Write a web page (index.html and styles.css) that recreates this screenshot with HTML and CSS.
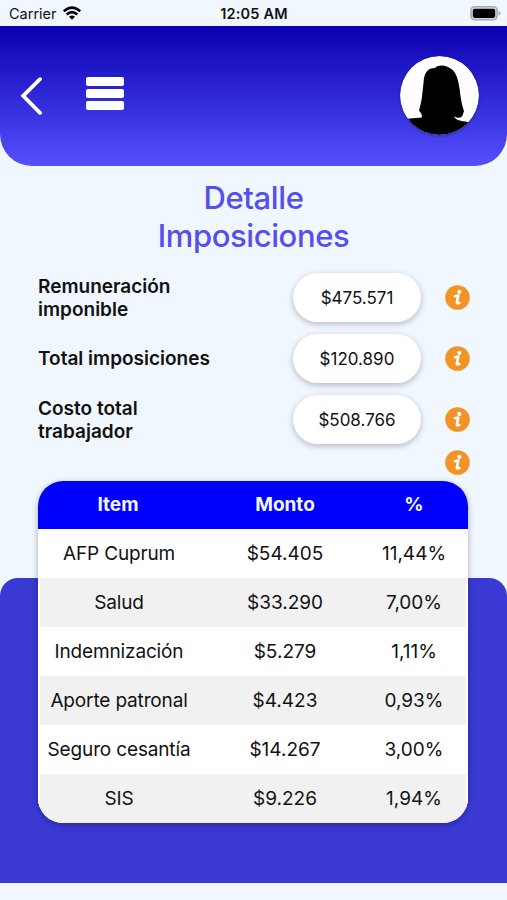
FILE: index.html
```html
<!DOCTYPE html>
<html lang="es">
<head>
    <meta charset="UTF-8">
    <meta name="viewport" content="width=device-width, initial-scale=1.0">
    <title>Detalle Imposiciones</title>
    <link rel="stylesheet" href="styles.css">
</head>
<body>
    <!-- Shared info icon -->
    <svg class="sprite" width="0" height="0">
        <symbol id="info" viewBox="0 0 25 25">
            <circle cx="12.5" cy="12.5" r="12.3" fill="#f39325"/>
            <circle cx="14.3" cy="6.900" r="2.100" fill="#fff"/>
            <path d="M10 11.300 L13.300 10.600 L11.900 17.400 Q11.600 19 14.300 18" fill="none" stroke="#fff" stroke-width="2.6" stroke-linecap="round" stroke-linejoin="round"/>
        </symbol>
    </svg>

    <div class="status-bar">
        <div class="carrier">
            <span>Carrier</span>
            <svg width="18" height="14" viewBox="0 0 18 14">
                <path d="M.8 5.300 Q9 -2 17.200 5.300" fill="none" stroke="#000" stroke-width="2.7"/>
                <path d="M3.700 8.500 Q9 3.700 14.300 8.500" fill="none" stroke="#000" stroke-width="2.5"/>
                <path d="M6 10.800 Q9 8.300 12 10.800 L9 13.800 Z" fill="#000"/>
            </svg>
        </div>
        <span class="time">12:05 AM</span>
        <svg class="battery" width="31" height="15" viewBox="0 0 31 15">
            <rect x="1" y=".8" width="26" height="13" rx="3.6" fill="#d9dde2" stroke="#a7abb0" stroke-width="1.6"/>
            <rect x="2.8" y="2.7" width="22.4" height="9.2" rx="1.8" fill="#000"/>
            <path d="M28.5 5 Q30.5 5.6 30.5 7.3 Q30.5 9 28.5 9.6 Z" fill="#a7abb0"/>
        </svg>
    </div>

    <header class="top">
        <svg class="back" width="22" height="38" viewBox="0 0 22 38">
            <path d="M20 2.200 L3.200 18.800 L20 35.800" fill="none" stroke="#fff" stroke-width="3.8" stroke-linecap="round"/>
        </svg>
        <div class="menu">
            <span></span>
            <span></span>
            <span></span>
        </div>
        <svg class="avatar" width="79" height="79" viewBox="0 0 79 79">
            <clipPath id="round"><circle cx="39.5" cy="39.5" r="39.5"/></clipPath>
            <circle cx="39.5" cy="39.5" r="39.5" fill="#fff"/>
            <path clip-path="url(#round)" d="M0 65 C5 62 14 62.500 22 61.500 L21.500 58 L19 54.500 C21.500 47 22.500 37 23.500 27 C24 16 28 12 35 12 C38 9 43 9 48 11 C56 14 58 23 59.500 32 C60.500 42 62 49 64 55 L63 58 C63 62 57 63 54 60 C55 64 61 65 68 66 L79 70 L79 79 L0 79 Z" fill="#000"/>
        </svg>
    </header>

    <main>
        <h1>Detalle<br>Imposiciones</h1>

        <div class="summary">
            <div class="row">
                <span class="label">Remuneración imponible</span>
                <span class="amount">$475.571</span>
                <svg class="info"><use href="#info"/></svg>
            </div>
            <div class="row">
                <span class="label">Total imposiciones</span>
                <span class="amount">$120.890</span>
                <svg class="info"><use href="#info"/></svg>
            </div>
            <div class="row">
                <span class="label">Costo total<br>trabajador</span>
                <span class="amount">$508.766</span>
                <svg class="info"><use href="#info"/></svg>
            </div>
            <div class="more">
                <svg class="info"><use href="#info"/></svg>
            </div>
        </div>

        <section class="detail">
            <table>
                <thead>
                    <tr><th>Item</th><th>Monto</th><th>%</th></tr>
                </thead>
                <tbody>
                    <tr><td>AFP Cuprum</td><td>$54.405</td><td>11,44%</td></tr>
                    <tr><td>Salud</td><td>$33.290</td><td>7,00%</td></tr>
                    <tr><td>Indemnización</td><td>$5.279</td><td>1,11%</td></tr>
                    <tr><td>Aporte patronal</td><td>$4.423</td><td>0,93%</td></tr>
                    <tr><td>Seguro cesantía</td><td>$14.267</td><td>3,00%</td></tr>
                    <tr><td>SIS</td><td>$9.226</td><td>1,94%</td></tr>
                </tbody>
            </table>
        </section>
    </main>
</body>
</html>
```
FILE: styles.css
```css
* {
    margin: 0;
    padding: 0;
    box-sizing: border-box;
}

body {
    font-family: Inter, 'Liberation Sans', sans-serif;
    background-color: #f0f7ff;
    color: #111;
    min-height: 900px;
}

svg {
    display: block;
    flex: none;
}

.sprite {
    position: absolute;
}

/* Status bar */
.status-bar {
    display: grid;
    grid-template-columns: 1fr auto 1fr;
    align-items: center;
    height: 25.5px;
    padding: 1px 6px 0 9px;
    font-size: 14.5px;
}

.carrier {
    display: flex;
    align-items: center;
    gap: 6px;
}

.carrier svg {
    margin-top: -1px;
}

.time {
    margin-right: 2px;
    font-weight: 600;
    letter-spacing: 0.2px;
}

.battery {
    justify-self: end;
}

/* Header */
.top {
    display: flex;
    align-items: center;
    height: 140px;
    padding: 0 28px 0 20px;
    background: linear-gradient(#0a00b0, #5550fc);
    border-radius: 0 0 32px 32px;
}

.menu {
    display: flex;
    flex-direction: column;
    gap: 3px;
    width: 38px;
    margin: -4px auto 0 44px;
}

.menu span {
    height: 9px;
    background: #fff;
    border-radius: 2px;
}

.avatar {
    border-radius: 50%;
    box-shadow: 0 1px 3px rgba(0, 0, 0, 0.3);
}

h1 {
    margin-top: 13px;
    color: #554ff0;
    font-size: 31px;
    font-weight: 500;
    letter-spacing: -0.4px;
    line-height: 38.5px;
    text-align: center;
}

/* Totals */
.summary {
    padding: 17px 37px 0 38px;
}

.row {
    display: flex;
    align-items: center;
    height: 49px;
    margin-bottom: 12px;
}

.label {
    width: 180px;
    margin-right: auto;
    padding-top: 1px;
    font-size: 19px;
    font-weight: 600;
    line-height: 23px;
}

.amount {
    width: 128px;
    height: 49px;
    margin-right: 24px;
    background: #fff;
    border-radius: 25px;
    box-shadow: 0 2px 6px rgba(0, 0, 0, 0.25);
    font-size: 17px;
    line-height: 51px;
    text-align: center;
}

.info {
    width: 25px;
    height: 25px;
}

.more {
    display: flex;
    justify-content: flex-end;
    margin-top: -6px;
}

/* Breakdown table, pulled up over the top edge of the blue panel */
.detail {
    display: flow-root;
    height: 305px;
    margin-top: 103px;
    padding: 0 39px 0 38px;
    background: #3a39d3;
    border-radius: 18px 18px 0 0;
}

table {
    width: 430px;
    height: 342px;
    margin-top: -97px;
    table-layout: fixed;
    border-spacing: 0;
    border-radius: 25px;
    overflow: hidden;
    background: #fff;
    box-shadow: 0 2px 6px rgba(0, 0, 0, 0.3);
    font-size: 19px;
    text-align: center;
}

th {
    height: 48px;
    background: #0000fe;
    color: #f0f7ff;
    font-weight: 700;
}

td {
    height: 49px;
}

th:first-child {
    width: 160px;
}

th:nth-child(2),
td:nth-child(2) {
    width: 162px;
    padding-left: 12px;
}

tbody tr:nth-child(even) td {
    background: #f1f1f1;
}

td:first-child {
    border-left: 2px solid #fff;
    letter-spacing: -0.15px;
}

td:last-child {
    padding-left: 2px;
    border-right: 2px solid #fff;
}
```
